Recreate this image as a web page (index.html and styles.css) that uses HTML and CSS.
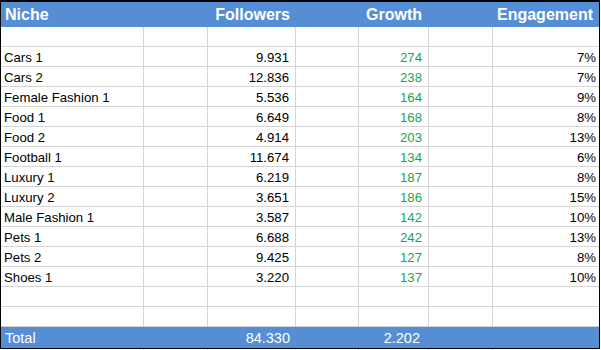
FILE: index.html
```html
<!DOCTYPE html>
<html>
<head>
<meta charset="utf-8">
<link rel="stylesheet" href="styles.css">
</head>
<body>
<div class="sheet">
  <div class="row head">
    <div class="c c1">Niche</div><div class="c"></div><div class="c c3">Followers</div><div class="c"></div><div class="c c5">Growth</div><div class="c"></div><div class="c c7">Engagement</div>
  </div>
  <div class="row data"><div class="c c1"></div><div class="c"></div><div class="c c3"></div><div class="c"></div><div class="c c5"></div><div class="c"></div><div class="c c7"></div></div>
  <div class="row data"><div class="c c1">Cars 1</div><div class="c"></div><div class="c c3">9.931</div><div class="c"></div><div class="c c5">274</div><div class="c"></div><div class="c c7">7%</div></div>
  <div class="row data"><div class="c c1">Cars 2</div><div class="c"></div><div class="c c3">12.836</div><div class="c"></div><div class="c c5">238</div><div class="c"></div><div class="c c7">7%</div></div>
  <div class="row data"><div class="c c1">Female Fashion 1</div><div class="c"></div><div class="c c3">5.536</div><div class="c"></div><div class="c c5">164</div><div class="c"></div><div class="c c7">9%</div></div>
  <div class="row data"><div class="c c1">Food 1</div><div class="c"></div><div class="c c3">6.649</div><div class="c"></div><div class="c c5">168</div><div class="c"></div><div class="c c7">8%</div></div>
  <div class="row data"><div class="c c1">Food 2</div><div class="c"></div><div class="c c3">4.914</div><div class="c"></div><div class="c c5">203</div><div class="c"></div><div class="c c7">13%</div></div>
  <div class="row data"><div class="c c1">Football 1</div><div class="c"></div><div class="c c3">11.674</div><div class="c"></div><div class="c c5">134</div><div class="c"></div><div class="c c7">6%</div></div>
  <div class="row data"><div class="c c1">Luxury 1</div><div class="c"></div><div class="c c3">6.219</div><div class="c"></div><div class="c c5">187</div><div class="c"></div><div class="c c7">8%</div></div>
  <div class="row data"><div class="c c1">Luxury 2</div><div class="c"></div><div class="c c3">3.651</div><div class="c"></div><div class="c c5">186</div><div class="c"></div><div class="c c7">15%</div></div>
  <div class="row data"><div class="c c1">Male Fashion 1</div><div class="c"></div><div class="c c3">3.587</div><div class="c"></div><div class="c c5">142</div><div class="c"></div><div class="c c7">10%</div></div>
  <div class="row data"><div class="c c1">Pets 1</div><div class="c"></div><div class="c c3">6.688</div><div class="c"></div><div class="c c5">242</div><div class="c"></div><div class="c c7">13%</div></div>
  <div class="row data"><div class="c c1">Pets 2</div><div class="c"></div><div class="c c3">9.425</div><div class="c"></div><div class="c c5">127</div><div class="c"></div><div class="c c7">8%</div></div>
  <div class="row data"><div class="c c1">Shoes 1</div><div class="c"></div><div class="c c3">3.220</div><div class="c"></div><div class="c c5">137</div><div class="c"></div><div class="c c7">10%</div></div>
  <div class="row data"><div class="c c1"></div><div class="c"></div><div class="c c3"></div><div class="c"></div><div class="c c5"></div><div class="c"></div><div class="c c7"></div></div>
  <div class="row data"><div class="c c1"></div><div class="c"></div><div class="c c3"></div><div class="c"></div><div class="c c5"></div><div class="c"></div><div class="c c7"></div></div>
  <div class="row total">
    <div class="c c1">Total</div><div class="c"></div><div class="c c3">84.330</div><div class="c"></div><div class="c c5">2.202</div><div class="c"></div><div class="c c7"></div>
  </div>
</div>
<div class="below">
  <div class="c"></div><div class="c"></div><div class="c"></div><div class="c"></div><div class="c"></div><div class="c"></div><div class="c"></div>
</div>
</body>
</html>
```

FILE: styles.css
```css
html, body {
  margin: 0;
  padding: 0;
  background: #ffffff;
}
body {
  font-family: "Liberation Sans", Arial, sans-serif;
  color: #000000;
}
.sheet {
  width: 600px;
  box-sizing: border-box;
  border-top: 2px solid #000;
  border-left: 1px solid #000;
  border-right: 1px solid #000;
  border-bottom: 1px solid #000;
}
.row, .below {
  display: grid;
  grid-template-columns: 143px 64px 88px 63px 70px 64px 106px;
}
.c {
  box-sizing: border-box;
  white-space: nowrap;
  overflow: visible;
}
.c1 { text-align: left; }
.c3, .c5, .c7 { text-align: right; }

/* header */
.head {
  background: #558ed5;
  color: #ffffff;
  font-weight: bold;
  font-size: 16px;
  height: 25px;
  line-height: 25px;
}
.head .c1 { padding-left: 4px; }
.head .c3 { padding-right: 6px; }
.head .c5 { padding-right: 7px; }
.head .c7 { padding-right: 6px; }

/* data rows */
.data { font-size: 13.2px; }
.data .c {
  height: 20px;
  padding-top: 2px;
  line-height: 17px;
  border-right: 1px solid #d4d4d4;
  border-bottom: 1px solid #d4d4d4;
}
.data .c7 { border-right: none; }
.data .c1 { padding-left: 3px; }
.data .c3 { padding-right: 6px; }
.data .c5 { padding-right: 6px; color: #16a84e; }
.data .c7 { padding-right: 3px; }

/* total */
.total {
  background: #558ed5;
  color: #ffffff;
  font-size: 14.5px;
  height: 21px;
}
.total .c {
  padding-top: 1px;
  line-height: 20px;
}
.total .c1 { padding-left: 4px; }
.total .c3 { padding-right: 6px; }
.total .c5 { padding-right: 9px; }

.below {
  height: 1px;
  padding-left: 1px;
}
.below .c {
  height: 1px;
  border-right: 1px solid #d4d4d4;
}
.below .c:last-child { border-right: none; }
```
